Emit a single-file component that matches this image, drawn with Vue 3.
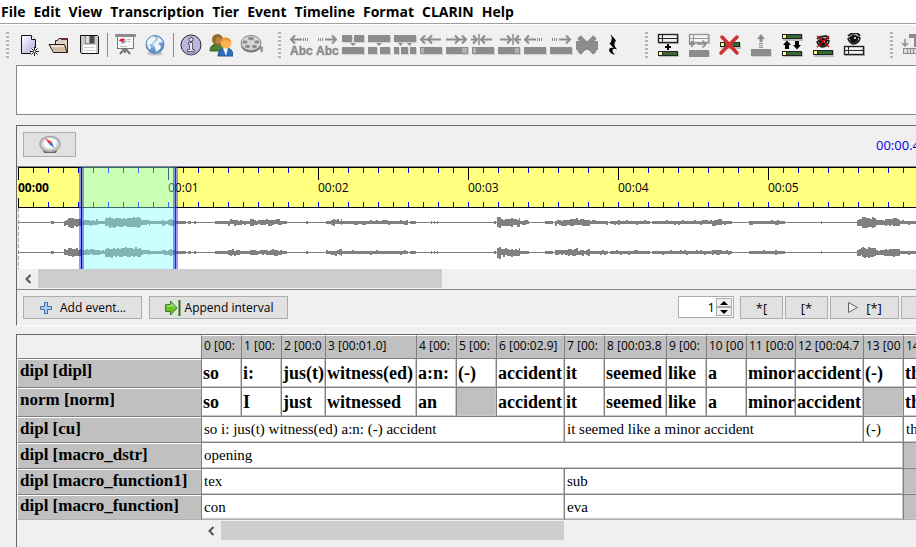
<script setup>
import { ref } from 'vue'

const menus = ['File', 'Edit', 'View', 'Transcription', 'Tier', 'Event', 'Timeline', 'Format', 'CLARIN', 'Help']

const G = '#8c8c8c'
const bar = (y) =>
  `<rect x="3" y="${y + 1}" width="20" height="6" fill="#bdbdbd"/><rect x="2" y="${y}" width="20" height="5" fill="#222"/><rect x="3" y="${y + 1}" width="3" height="3" fill="#ffff80"/><rect x="7" y="${y + 1}" width="14" height="3" fill="#356a35"/>`
const sheet = (y, c) =>
  `<rect x="3" y="${y + 1}" width="20" height="9" fill="#c0c0c0"/><rect x="2.5" y="${y}.5" width="19" height="8" fill="#f4f4f4" stroke="${c}" stroke-width="1.4"/><path d="M2 ${y + 4}.5H22M6.5 ${y}V${y + 9}" stroke="${c}"/>`
const greyBar = (y, x = 1, w = 22) =>
  `<rect x="${x + 1}" y="${y + 1}" width="${w}" height="7" fill="#d2d2d2"/><rect x="${x}" y="${y}" width="${w}" height="7" fill="${G}"/>`
const leftHead = (x) => `<path d="M${x + 5} 2.5L${x + 1} 6.5L${x + 5} 10.5" fill="none" stroke="${G}" stroke-width="2"/>`
const rightHead = (x) => `<path d="M${x - 5} 2.5L${x - 1} 6.5L${x - 5} 10.5" fill="none" stroke="${G}" stroke-width="2"/>`
const line = (a, b) => `<path d="M${a} 6.5H${b}" stroke="${G}" stroke-width="2"/>`
const dots = (a, b) => `<path d="M${a} 6.5H${b}" stroke="${G}" stroke-width="3" stroke-dasharray="1 1"/>`
const arrowL = leftHead(1) + line(2, 13) + dots(14, 20)
const arrowR = dots(3, 9) + line(10, 21) + rightHead(22)
const abc = `<text x="1" y="22" font-family="Liberation Sans, sans-serif" font-weight="700" font-size="12" fill="${G}" stroke="${G}" stroke-width=".4">Abc</text>`
const eye = (y) =>
  `<path d="M6 ${y + 6}Q11 ${y + 1} 18 ${y + 5}Q17 ${y + 11} 11 ${y + 11}Q8 ${y + 10} 6 ${y + 6}Z" fill="#d0d0d0" stroke="#111" stroke-width="1.5"/><circle cx="12" cy="${y + 6}" r="4" fill="#111"/><circle cx="13" cy="${y + 5}" r="1" fill="#fff"/><path d="M6 ${y + 3}L9 ${y + 1}L15 ${y}L18 ${y + 3}" fill="none" stroke="#222" stroke-width="2"/>`

const fileIcons = [
  { label: 'New', art: '<defs><linearGradient id="pg" x1="0" y1="0" x2="1" y2="1"><stop offset="0" stop-color="#fff"/><stop offset="1" stop-color="#a9a9dd"/></linearGradient></defs><path d="M4.5 2.500H14L18.500 7V20.500H4.500Z" fill="url(#pg)" stroke="#111"/><path d="M14.500 2.500V6.500H18.500" fill="#fff" stroke="#111"/><path d="M14 15H21V22H14Z" fill="#f0f0f0"/><path d="M17.500 14V23M13 18.500H22M14.500 15.500L20.500 21.500M20.500 15.500L14.500 21.500" stroke="#111"/><rect x="16.500" y="17.500" width="2" height="2" fill="#fff"/>' },
  { label: 'Open', art: '<path d="M8.500 12V7.500H10.500L12 5.500H20.500V19.500H7" fill="#ddd0c4" stroke="#2a1f18"/><path d="M14 5H20V7H14Z" fill="#6b2f2f"/><path d="M2 11.500H17.500L20 19.500H6.500Z" fill="#d3bda5" stroke="#2a1f18"/><path d="M3.500 12.500H16.500L17 14H5Z" fill="#f4e9de"/>' },
  { label: 'Save', art: '<path d="M3.500 2.500H20.500L21.500 3.500V20.500H4.500L3.500 19.500Z" fill="#c9c9c9" stroke="#111"/><rect x="8" y="3" width="10" height="8" fill="#8b8b8b"/><rect x="9" y="3" width="3" height="7" fill="#ddd"/><rect x="13" y="3" width="4" height="7" fill="#4b4b4b"/><rect x="6" y="12" width="13" height="8" fill="#fff"/><path d="M7 14.500H18M7 17.500H18" stroke="#ccc"/>' },
  null,
  { label: 'Presentation', art: '<path d="M12 15L7 21M12 15L17 21M12 14V20" stroke="#777" stroke-width="2"/><rect x="4.500" y="3.500" width="16" height="12" fill="#f8f8f8" stroke="#777"/><rect x="2" y="1" width="21" height="3" rx="1" fill="#8c8c8c"/><path d="M6 8A4 3 0 0 1 12 6L10 9Z" fill="#d8232a"/><path d="M13 7A4 3 0 0 1 7 10L10 9Z" fill="#6c88bd"/><path d="M14 6.500H18M14 8.500H17M7 13.500H14" stroke="#bbb"/>' },
  { label: 'Web', art: '<defs><radialGradient id="gl" cx=".4" cy=".3"><stop offset="0" stop-color="#d5e8fa"/><stop offset="1" stop-color="#6293c9"/></radialGradient></defs><ellipse cx="12" cy="20.500" rx="8" ry="2" fill="#c6c6c6"/><circle cx="12" cy="11.500" r="9" fill="url(#gl)" stroke="#5b8abf"/><path d="M4 9Q6 4 11 3.500L13 6L10 8L9 11L6 11L8 14L7 17Q4 14 4 9ZM14 4L18 6L20 10L17 9L15 11L18 13L17 16L13 19L12 14L10 12L13 9L15 7Z" fill="#f1f7fc"/>' },
  null,
  { label: 'Information', art: '<circle cx="12" cy="12" r="10" fill="#b9b8dc" stroke="#26263a"/><path d="M4 17A9 9 0 0 0 20 17A10 7 0 0 1 4 17Z" fill="#8f8eb6"/><circle cx="12" cy="6.500" r="2" fill="#e6e6f6" stroke="#444"/><path d="M9.500 9.500H13.500V16.500H15.500V18.500H8.500V16.500H10.500V11.500H9.500Z" fill="#e6e6f6" stroke="#444" stroke-width=".8"/>' },
  { label: 'Speakers', art: '<path d="M1 18Q1 11 8 11Q14 11 15 18Z" fill="#4f7f30" stroke="#38691f"/><circle cx="8.500" cy="6.500" r="5.500" fill="#9a6a25"/><path d="M6 9Q9 13 13 8L12 5L8 4Z" fill="#b98541"/><path d="M9 23Q9 15 17 15Q24 15 24 23Z" fill="#2e6fbd" stroke="#1e5495"/><path d="M14 15L17 23L19 15Z" fill="#eef5fb"/><circle cx="17" cy="10" r="5.500" fill="#f8b352"/><path d="M12 9Q12 4 17 4.500Q22 5 22 9L17 7Z" fill="#ea9530"/>' },
  { label: 'Recording', art: '<path d="M18 15H23V19" fill="none" stroke="#999" stroke-width="3"/><ellipse cx="12" cy="12" rx="10" ry="7.500" fill="#777"/><ellipse cx="12" cy="10" rx="10" ry="7.500" fill="#d5d7d5" stroke="#888"/><g fill="#8d918d"><ellipse cx="12" cy="5.500" rx="3" ry="1.800"/><ellipse cx="6" cy="9" rx="2.600" ry="1.800"/><ellipse cx="18" cy="9" rx="2.600" ry="1.800"/><ellipse cx="8.500" cy="13.500" rx="2.600" ry="1.800"/><ellipse cx="15.500" cy="13.500" rx="2.600" ry="1.800"/></g>' }
]

const eventIcons = [
  { label: 'Shift characters left', art: arrowL + abc },
  { label: 'Shift characters right', art: arrowR + abc },
  { label: 'Merge', art: greyBar(2, 1, 10) + greyBar(2, 13, 10) + greyBar(14) + `<path d="M9 10H15L12 13Z" fill="${G}"/>` },
  { label: 'Split', art: greyBar(2) + greyBar(14, 1, 9) + greyBar(14, 13, 10) + `<path d="M9 10H15L12 13Z" fill="${G}"/>` },
  { label: 'Double split', art: greyBar(2) + greyBar(14, 1, 5) + greyBar(14, 8, 7) + greyBar(14, 17, 6) + `<path d="M5 10H10L7.5 13ZM14 10H19L16.5 13Z" fill="${G}"/>` },
  { label: 'Extend left', art: leftHead(1) + leftHead(8) + line(3, 22) + greyBar(14) + '<rect x="2" y="15" width="3" height="5" fill="#b3b3b3"/>' },
  { label: 'Extend right', art: line(1, 20) + rightHead(15) + rightHead(22) + greyBar(14) + '<rect x="17" y="15" width="5" height="5" fill="#b3b3b3"/>' },
  { label: 'Shrink left', art: rightHead(7) + line(0, 6) + leftHead(9) + line(10, 21) + `<path d="M8 1V12" stroke="${G}" stroke-width="1.5"/>` + greyBar(14) + '<rect x="2" y="15" width="3" height="5" fill="#b3b3b3"/>' },
  { label: 'Shrink right', art: line(3, 14) + rightHead(15) + leftHead(17) + line(18, 24) + `<path d="M16 1V12" stroke="${G}" stroke-width="1.5"/>` + greyBar(14) + '<rect x="18" y="15" width="4" height="5" fill="#b3b3b3"/>' },
  { label: 'Move left', art: arrowL + greyBar(14) },
  { label: 'Move right', art: arrowR + greyBar(14) },
  { label: 'Delete event', art: `<rect x="1" y="8" width="22" height="9" fill="${G}"/><path d="M4 4L20 20M20 4L4 20" stroke="${G}" stroke-width="5"/>` },
  { label: 'Insert pause', art: '<path d="M9.5 1L15 7.5Q11.5 11 16 16.5Q11 14.5 11.5 18Q12 20 14 22Q8 20 8 16.5Q8.5 14 12.5 15L8.5 10.5Q12.5 7 9.5 1Z" fill="#000"/>' }
]

const tierIcons = [
  { label: 'Add tier', art: sheet(1, '#222') + '<path d="M12 11V17M9 14H15" stroke="#000" stroke-width="2"/>' + bar(18) },
  { label: 'Insert tier', art: sheet(1, '#999') + `<path d="M5 8V14M2 11H8" stroke="${G}" stroke-width="2"/><path d="M10 11H19M15.5 7.5L19 11L15.5 14.5" fill="none" stroke="${G}" stroke-width="1.5"/>` + greyBar(17, 2, 20) },
  { label: 'Remove tier', art: bar(9) + '<path d="M4 4L19 20M19 4L3 20" stroke="#d2302f" stroke-width="3.5" stroke-linecap="round"/>' },
  { label: 'Move tier up', art: `<path d="M12 1L16 6H13.5V9H10.5V6H8Z" fill="${G}"/><path d="M12 10V15" stroke="${G}" stroke-width="4" stroke-dasharray="1 1"/>` + greyBar(16, 2, 20) },
  { label: 'Change tier order', art: bar(1) + '<path d="M7 7.5L11 12H9V16H5V12H3ZM17 16.500L21 12H19V8H15V12H13Z" fill="#000"/>' + bar(18) },
  { label: 'Hide tier', art: eye(3) + '<path d="M6 3L18 14M18 3L6 14" stroke="#d00000" stroke-width="1.5"/>' + bar(17) },
  { label: 'Show all tiers', art: eye(0) + sheet(13, '#222') }
]
const formatIcons = [
  { label: 'Format tier', art: `<path d="M4 6V13M1 10L4 13L7 10" fill="none" stroke="${G}" stroke-width="1.5"/><path d="M8 1H23V5H18V14H13V5H8Z" fill="${G}"/><rect x="2.5" y="15.5" width="21" height="5" fill="#ddd" stroke="${G}"/><path d="M6.5 15V21M9.5 15V21M12.5 15V21" stroke="${G}"/>` }
]
const groups = [
  { id: 'file', icons: fileIcons },
  { id: 'event', icons: eventIcons },
  { id: 'tier', icons: tierIcons },
  { id: 'format', icons: formatIcons }
]

const SECOND = 150
const ticks = Array.from({ length: 200 }, (_, i) => ({ x: i * 15, major: i % 10 === 0 }))
const seconds = Array.from({ length: 20 }, (_, i) => ({ x: i * SECOND, text: '00:' + String(i).padStart(2, '0') }))

// [start, end, amplitude]
const envelope = [
  [33, 36, 1], [46, 50, 3], [50, 56, 5], [56, 64, 4], [64, 80, 3], [80, 87, 2], [87, 97, 5], [97, 123, 5], [123, 132, 3],
  [132, 144, 1], [144, 158, 3], [158, 168, 1], [170, 173, 1], [176, 178, 1], [197, 210, 1], [210, 224, 3], [224, 232, 2],
  [232, 264, 3], [264, 269, 1], [288, 290, 1], [308, 313, 2], [313, 324, 3], [324, 390, 2], [392, 398, 1], [413, 414, 1],
  [416, 417, 1], [419, 420, 1], [476, 478, 1], [479, 483, 6], [483, 502, 4], [502, 511, 2], [527, 535, 1], [537, 550, 3],
  [550, 560, 4], [560, 572, 3], [572, 590, 2], [592, 632, 2], [634, 642, 1], [642, 694, 2], [694, 704, 3], [704, 714, 2],
  [731, 767, 2], [803, 804, 1], [839, 844, 4], [844, 858, 5], [858, 867, 3], [867, 882, 4], [882, 920, 2]
]
function wave(mid, seed) {
  let d = ''
  let s = seed
  const reach = (amp) => {
    s = (s * 1103515 + 12345) % 2147483647
    const r = s / 2147483647
    return Math.max(1, amp - (r > 0.85 ? 0 : r > 0.2 ? 1 : 2))
  }
  for (const [a, b, amp] of envelope) {
    for (let x = a; x < b; x += 2) {
      const w = Math.min(2, b - x)
      d += `M${x} ${mid - reach(amp)}h${w}V${mid + 1 + reach(amp)}h-${w}Z`
    }
  }
  return d
}
const channels = [
  { mid: 55, d: wave(55, 7) },
  { mid: 85, d: wave(85, 91) }
]

const columns = [
  ['0 [00:', 40], ['1 [00:', 40], ['2 [00:0', 44], ['3 [00:01.0]', 91], ['4 [00:', 40], ['5 [00:', 40], ['6 [00:02.9]', 68],
  ['7 [00:', 40], ['8 [00:03.8', 62], ['9 [00:', 40], ['10 [00', 40], ['11 [00:0', 49], ['12 [00:04.7', 68], ['13 [00', 40], ['14 [00', 60]
]
const tableWidth = 184 + columns.reduce((n, c) => n + c[1], 0)
const single = (words) => words.map((t) => ({ t, span: 1 }))
const rows = [
  { label: 'dipl [dipl]', big: true, cells: single(['so', 'i:', 'jus(t)', 'witness(ed)', 'a:n:', '(-)', 'accident', 'it', 'seemed', 'like', 'a', 'minor', 'accident', '(-)', 'the']) },
  { label: 'norm [norm]', big: true, cells: single(['so', 'I', 'just', 'witnessed', 'an', '', 'accident', 'it', 'seemed', 'like', 'a', 'minor', 'accident', '', 'the']) },
  { label: 'dipl [cu]', cells: [{ t: 'so i: jus(t) witness(ed) a:n: (-) accident', span: 7 }, { t: 'it seemed like a minor accident', span: 6 }, { t: '(-)', span: 1 }, { t: 'the', span: 1 }] },
  { label: 'dipl [macro_dstr]', cells: [{ t: 'opening', span: 14 }, { t: '', span: 1 }] },
  { label: 'dipl [macro_function1]', cells: [{ t: 'tex', span: 7 }, { t: 'sub', span: 7 }, { t: '', span: 1 }] },
  { label: 'dipl [macro_function]', cells: [{ t: 'con', span: 7 }, { t: 'eva', span: 7 }, { t: '', span: 1 }] }
]
const count = ref(1)
const message = ref('')
</script>

<template>
  <div class="app">
    <nav class="menubar">
      <button v-for="m in menus" :key="m" type="button">{{ m }}</button>
    </nav>

    <div class="toolbar">
      <div v-for="g in groups" :key="g.id" class="group" :class="g.id">
        <span class="grip"></span>
        <div class="icons">
          <template v-for="(icon, i) in g.icons" :key="i">
            <button v-if="icon" type="button" :aria-label="icon.label">
              <svg width="24" height="24" viewBox="0 0 24 24" v-html="icon.art"></svg>
            </button>
            <span v-else class="sep"></span>
          </template>
        </div>
      </div>
    </div>

    <main>
      <textarea v-model="message" class="message" aria-label="Event text"></textarea>

      <section class="player">
        <div class="player-top">
          <button type="button" class="btn nav-btn" aria-label="Navigate">
            <svg width="24" height="20" viewBox="0 0 24 20">
              <path d="M4 13H20L18 18H6Z" fill="#666" />
              <ellipse cx="12" cy="9" rx="10" ry="7.500" fill="#d8d8d8" stroke="#a6a6a6" stroke-width="1.500" />
              <ellipse cx="12" cy="8.500" rx="7.500" ry="6" fill="#fafafa" stroke="#c4c4c4" />
              <path d="M7 3L14 7L11 9Z" fill="#e23b30" />
              <path d="M16 13L14 7L11 9Z" fill="#2c79d8" />
            </svg>
          </button>
          <span class="clock">00:00.4</span>
        </div>

        <svg class="timeline" width="100%" height="102">
          <rect x="0" y="0" width="100%" height="102" fill="#fff" />
          <rect x="0" y="0" width="100%" height="41" fill="#ffff80" />
          <rect x="0" y="0" width="100%" height="1" fill="#000" />
          <rect x="0" y="40" width="100%" height="1" fill="#000" />
          <g v-for="t in ticks" :key="t.x">
            <rect :x="t.x" y="1" width="1" :height="t.major ? 12 : 5" :fill="t.major ? '#000' : '#0000ff'" />
            <rect :x="t.x" y="35" width="1" height="5" fill="#0000ff" />
          </g>
          <path d="M.5 1V41" stroke="#000" stroke-dasharray="12 18" />
          <path d="M.5 41V102" stroke="#a0a0a0" stroke-dasharray="4 2" />
          <text v-for="s in seconds" :key="s.x" :x="s.x" y="25" :class="{ first: s.x === 0 }">{{ s.text }}</text>
          <g v-for="c in channels" :key="c.mid" fill="#808080">
            <rect x="0" :y="c.mid" width="100%" height="1" />
            <path :d="c.d" shape-rendering="crispEdges" />
          </g>
          <rect x="64" y="0" width="93" height="102" fill="#80ffff" fill-opacity=".42" />
          <rect x="61" y="0" width="5" height="102" fill="#3030ff" fill-opacity=".5" />
          <rect x="63" y="0" width="1" height="102" fill="#101050" />
          <rect x="155" y="0" width="5" height="102" fill="#3030ff" fill-opacity=".5" />
          <rect x="157" y="0" width="1" height="102" fill="#303080" />
        </svg>

        <div class="scroll wave-scroll">
          <button type="button" aria-label="Scroll left"><svg width="8" height="10"><path d="M6.500 1L2.500 5L6.500 9" fill="none" stroke="#555" stroke-width="2" /></svg></button>
          <span class="thumb"></span>
        </div>

        <div class="controls">
          <button type="button" class="btn add">
            <svg width="14" height="14" viewBox="0 0 14 14"><path d="M5.500 1.500H8.500V5.500H12.500V8.500H8.500V12.500H5.500V8.500H1.500V5.500H5.500Z" fill="#a9cbee" stroke="#3f6fac" /></svg>
            Add event...
          </button>
          <button type="button" class="btn append">
            <svg width="17" height="18" viewBox="0 0 17 18"><path d="M1.500 5.500H6.500V2L13 9L6.500 16V12.500H1.500Z" fill="#6ac22b" stroke="#3e7d1e" /><path d="M3 7H8V5L11 8.500" fill="none" stroke="#c6ee9c" /><path d="M15.500 1V17" stroke="#2f6d12" stroke-width="2" /></svg>
            Append interval
          </button>
          <div class="right">
            <div class="spinner">
              <input v-model="count" type="text" aria-label="Count" />
              <div class="steps">
                <button type="button" aria-label="Increase" @click="count++"><svg width="8" height="4"><path d="M0 4L4 0L8 4Z" /></svg></button>
                <button type="button" aria-label="Decrease" @click="count--"><svg width="8" height="4"><path d="M0 0L4 4L8 0Z" /></svg></button>
              </div>
            </div>
            <button type="button" class="btn small">*[</button>
            <button type="button" class="btn small">[*</button>
            <button type="button" class="btn play">
              <svg width="12" height="13" viewBox="0 0 12 13"><path d="M1.500 1.500L10.500 6.500L1.500 11.500Z" fill="#eee" stroke="#666" /></svg>
              [*]
            </button>
            <button type="button" class="btn cut" aria-label="Play"></button>
          </div>
        </div>
      </section>

      <section class="score">
        <table :style="{ width: tableWidth + 'px' }">
          <colgroup>
            <col class="label-col" />
            <col v-for="c in columns" :key="c[0]" :style="{ width: c[1] + 'px' }" />
          </colgroup>
          <thead>
            <tr>
              <td class="corner"></td>
              <th v-for="c in columns" :key="c[0]" scope="col">{{ c[0] }}</th>
            </tr>
          </thead>
          <tbody>
            <tr v-for="r in rows" :key="r.label" :class="{ big: r.big }">
              <th scope="row">{{ r.label }}</th>
              <td v-for="(c, i) in r.cells" :key="i" :colspan="c.span" :class="{ empty: !c.t }">{{ c.t }}</td>
            </tr>
          </tbody>
        </table>
        <div class="scroll score-scroll">
          <button type="button" aria-label="Scroll left"><svg width="8" height="10"><path d="M6.500 1L2.500 5L6.500 9" fill="none" stroke="#555" stroke-width="2" /></svg></button>
          <span class="thumb"></span>
        </div>
      </section>
    </main>
  </div>
</template>

<style>
body {
  background: #f0f0f0;
}
</style>

<style scoped>
* {
  box-sizing: border-box;
}
.app {
  display: flex;
  flex-direction: column;
  min-height: 100vh;
  overflow: hidden;
  background: #f0f0f0;
  color: #000;
  font: 12px/16px "Open Sans", sans-serif;
}
button {
  padding: 0;
  border: 0;
  background: none;
  color: inherit;
  font: inherit;
}
svg {
  display: block;
  flex: none;
}
.menubar {
  display: flex;
  gap: 8px;
  height: 24px;
  padding: 0 1px;
  border-bottom: 1px solid #a0a0a0;
  background: #fff;
}
.menubar button {
  font-weight: 700;
  font-size: 14px;
  line-height: 23px;
}
.toolbar {
  display: flex;
  height: 41px;
  padding-left: 6px;
  border-top: 1px solid #fff;
}
.group {
  display: flex;
  flex: none;
  align-items: center;
  gap: 8px;
}
.file {
  padding-right: 15px;
}
.event {
  padding-right: 20px;
}
.tier {
  padding-right: 24px;
}
.grip {
  width: 3px;
  height: 27px;
  background: repeating-linear-gradient(#b4b4b4 0 2px, transparent 2px 4px);
}
.icons {
  display: flex;
  align-items: center;
  gap: 6px;
}
.event .icons {
  gap: 2px;
}
.tier .icons {
  gap: 7px;
}
.sep {
  width: 1px;
  height: 24px;
  margin-right: -1px;
  background: #888;
}
main {
  display: flex;
  flex: 1;
  flex-direction: column;
  padding-left: 16px;
}
.message {
  display: block;
  width: 100%;
  height: 50px;
  border: 1px solid #828790;
  border-right: 0;
  background: #fff;
  resize: none;
}
.player {
  margin-top: 10px;
  border: solid #696969;
  border-width: 1px 0 0 1px;
  border-bottom: 1px solid #fff;
  overflow: hidden;
}
.player-top {
  display: flex;
  align-items: center;
  justify-content: space-between;
  height: 41px;
  padding: 0 0 3px 6px;
  border-bottom: 1px solid #828790;
}
.btn {
  display: flex;
  align-items: center;
  justify-content: center;
  gap: 7px;
  height: 23px;
  border: 1px solid #adadad;
  background: #e1e1e1;
  white-space: nowrap;
}
.nav-btn {
  width: 53px;
  height: 25px;
}
.clock {
  width: 40px;
  overflow: hidden;
  color: #0000e0;
  font-size: 13px;
  white-space: nowrap;
}
.timeline {
  margin-left: 1px;
}
.timeline text {
  font-size: 12px;
}
.timeline .first {
  font-weight: 700;
}
.scroll {
  display: flex;
  align-items: stretch;
  height: 20px;
}
.scroll button {
  display: flex;
  align-items: center;
  justify-content: center;
  width: 20px;
}
.thumb {
  background: #cdcdcd;
}
.wave-scroll {
  height: 21px;
  padding: 0 0 1px 1px;
  border-bottom: 1px solid #828790;
}
.wave-scroll .thumb {
  width: 45%;
}
.controls {
  display: flex;
  gap: 7px;
  padding: 6px 0 6px 6px;
}
.add {
  width: 119px;
}
.append {
  width: 139px;
  gap: 4px;
}
.right {
  display: flex;
  gap: 2px;
  margin-left: auto;
}
.spinner {
  display: flex;
  width: 56px;
  height: 22px;
  margin-right: 4px;
  padding: 1px;
  border: 1px solid #adadad;
  background: #fff;
}
.spinner input {
  width: 36px;
  min-width: 0;
  padding: 0 1px;
  border: 0;
  outline: 0;
  background: none;
  font: inherit;
  font-size: 13px;
  text-align: right;
}
.steps {
  display: flex;
  flex: 1;
  flex-direction: column;
}
.steps button {
  display: flex;
  flex: 1;
  align-items: center;
  justify-content: center;
  border: 1px solid #adadad;
  background: #f0f0f0;
}
.small {
  width: 43px;
  font-size: 13px;
}
.play {
  width: 69px;
  font-size: 13px;
}
.cut {
  width: 15px;
  border-right: 0;
}
.score {
  flex: 1;
  margin-top: 8px;
  border: solid #696969;
  border-width: 1px 0 0 1px;
  overflow: hidden;
}
table {
  border-collapse: separate;
  border-spacing: 0;
  table-layout: fixed;
}
.label-col {
  width: 184px;
}
th,
td {
  height: 26px;
  padding: 0 0 1px 2px;
  overflow: hidden;
  border: solid #808080;
  border-width: 1px 0 0 1px;
  box-shadow: inset -1px -1px #c8c8c8;
  background: #fff;
  font: 15px/20px "Liberation Serif", serif;
  text-align: left;
  white-space: nowrap;
}
thead th,
thead td {
  height: 23px;
}
thead th {
  padding: 0 0 2px 2px;
  border-top-color: #fff;
  background: #c0c0c0;
  box-shadow: none;
  font: 12px/18px "Open Sans", sans-serif;
}
thead .corner {
  border-color: #f0f0f0;
  background: #f0f0f0;
  box-shadow: none;
}
tbody th {
  padding: 0 0 2px 2px;
  border-color: #808080 #808080 #808080 #fff;
  background: #c0c0c0;
  box-shadow: inset 0 1px #fff;
  font-weight: 700;
  font-size: 17px;
}
.big th,
.big td {
  height: 29px;
}
.big th {
  padding-bottom: 4px;
}
.big td {
  padding-left: 1px;
  font-weight: 700;
  font-size: 18px;
}
td.empty {
  background: #c0c0c0;
}
tbody tr:last-child th,
tbody tr:last-child td {
  border-bottom: 1px solid #b0b0b0;
}
.score-scroll {
  padding: 1px 0 0 184px;
}
.score-scroll .thumb {
  width: 48%;
}
</style>
